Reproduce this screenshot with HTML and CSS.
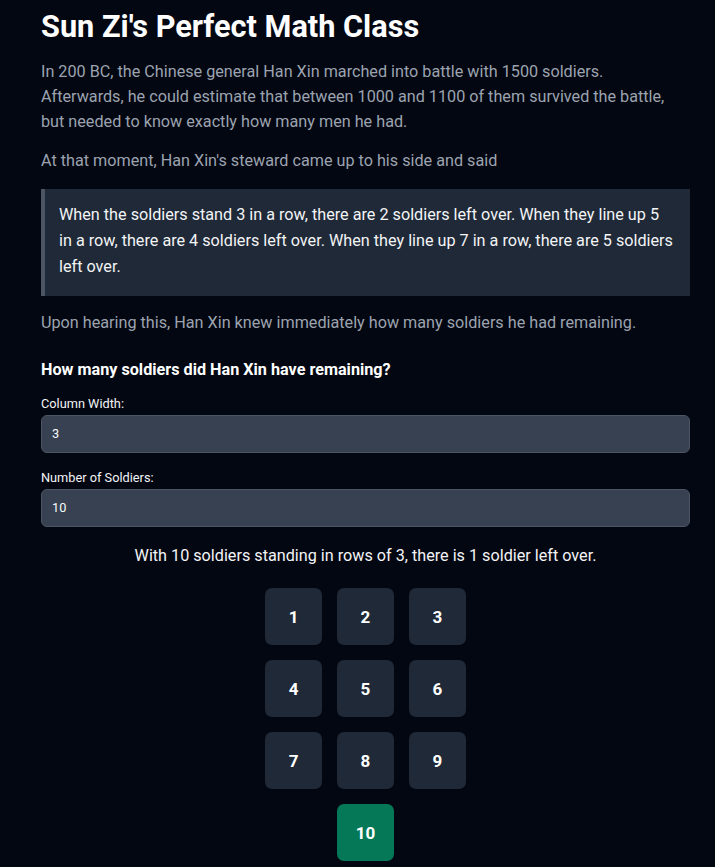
FILE: index.html
```html
<!DOCTYPE html>
<html lang="en">
<head>
<meta charset="utf-8">
<title>Sun Zi's Perfect Math Class</title>
<link rel="stylesheet" href="styles.css">
</head>
<body>
<main class="page">
  <h1 class="title">Sun Zi's Perfect Math Class</h1>
  <p class="text">In 200 BC, the Chinese general Han Xin marched into battle with 1500 soldiers. Afterwards, he could estimate that between 1000 and 1100 of them survived the battle, but needed to know exactly how many men he had.</p>
  <p class="text">At that moment, Han Xin's steward came up to his side and said</p>
  <blockquote class="quote">When the soldiers stand 3 in a row, there are 2 soldiers left over. When they line up 5 in a row, there are 4 soldiers left over. When they line up 7 in a row, there are 5 soldiers left over.</blockquote>
  <p class="text text-upon">Upon hearing this, Han Xin knew immediately how many soldiers he had remaining.</p>
  <h2 class="question">How many soldiers did Han Xin have remaining?</h2>
  <label class="label" for="cw">Column Width:</label>
  <input class="field" id="cw" type="text" value="3">
  <label class="label label-2" for="ns">Number of Soldiers:</label>
  <input class="field" id="ns" type="text" value="10">
  <p class="result">With 10 soldiers standing in rows of 3, there is 1 soldier left over.</p>
  <div class="grid">
    <div class="cell">1</div>
    <div class="cell">2</div>
    <div class="cell">3</div>
    <div class="cell">4</div>
    <div class="cell">5</div>
    <div class="cell">6</div>
    <div class="cell">7</div>
    <div class="cell">8</div>
    <div class="cell">9</div>
    <div class="cell cell-extra">10</div>
  </div>
</main>
</body>
</html>
```
FILE: styles.css
```css
html, body {
  margin: 0;
  padding: 0;
  background: #030712;
}
body {
  font-family: Roboto, "Liberation Sans", Arial, sans-serif;
  color: #f3f4f6;
}
.page {
  padding: 8.5px 25px 0 41px;
  display: flex;
  flex-direction: column;
}
.title {
  margin: 0 0 14.1px 0;
  font-size: 30.7px;
  line-height: 36px;
  font-weight: 700;
  color: #ffffff;
}
.text {
  margin: 0 0 14px 0;
  font-size: 16.2px;
  line-height: 25px;
  color: #9ca3af;
}
.quote {
  margin: 2.3px 0 0 0;
  padding: 13px 16px 15px 14px;
  border-left: 4px solid #4b5563;
  background: #1f2937;
  font-size: 16.2px;
  line-height: 26.3px;
  color: #f3f4f6;
}
.text-upon {
  margin-top: 14.3px;
  margin-bottom: 0;
}
.question {
  margin: 23.2px 0 0 0;
  font-size: 16.2px;
  line-height: 24px;
  font-weight: 700;
  color: #ffffff;
}
.label {
  margin-top: 13.3px;
  font-size: 12.75px;
  line-height: 16px;
  color: #f3f4f6;
}
.label-2 {
  margin-top: 17px;
}
.field {
  margin-top: 3.2px;
  box-sizing: border-box;
  height: 37.8px;
  width: 100%;
  padding: 0 10px;
  border: 1px solid #4b5563;
  border-radius: 6px;
  background: #374151;
  color: #f9fafb;
  font-family: Roboto, "Liberation Sans", Arial, sans-serif;
  font-size: 12.75px;
  outline: none;
}
.result {
  margin: 17.5px 0 0 0;
  text-align: center;
  font-size: 16.2px;
  line-height: 24px;
  color: #f3f4f6;
}
.grid {
  margin: 20px auto 0 auto;
  width: 202px;
  display: flex;
  flex-wrap: wrap;
  justify-content: center;
  gap: 14.6px;
}
.cell {
  width: 57.4px;
  height: 57.4px;
  border-radius: 7px;
  background: #1f2937;
  display: flex;
  align-items: center;
  justify-content: center;
  font-size: 17px;
  font-weight: 700;
  color: #ffffff;
}
.cell-extra {
  background: #047857;
}
```
